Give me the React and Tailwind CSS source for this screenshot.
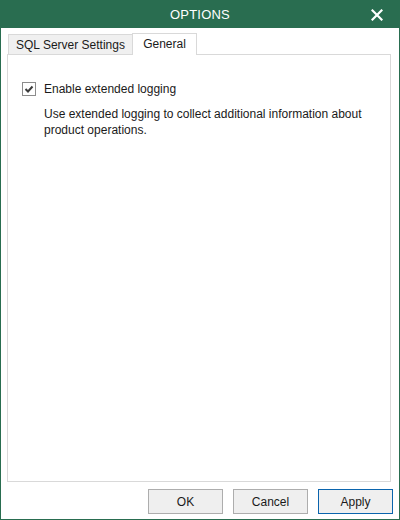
import React from 'react';

const font = { fontFamily: '"Liberation Sans", Arial, sans-serif' };

const CloseIcon = () => (
  <svg width="12" height="12" viewBox="0 0 12 12" className="block">
    <path d="M1.5 1.5 L10.5 10.5 M10.5 1.5 L1.5 10.5" stroke="#ffffff" strokeWidth="2.2" strokeLinecap="square" />
  </svg>
);

const CheckBox = () => (
  <span className="w-[14px] h-[14px] border border-[#8c8c8c] bg-white flex items-center justify-center">
    <svg width="10" height="10" viewBox="0 0 10 10" className="block">
      <path d="M1.5 5 L4 7.5 L8.5 2.5" fill="none" stroke="#3c3c3c" strokeWidth="2" />
    </svg>
  </span>
);

const Button = ({ children, primary }) => (
  <button
    className={
      primary
        ? 'w-[75px] h-[25px] bg-[#efefef] border border-[#0a64ad] text-[12px] text-[#1a1a1a]'
        : 'w-[75px] h-[25px] bg-[#efefef] border border-[#adadad] text-[12px] text-[#1a1a1a]'
    }
  >
    {children}
  </button>
);

export default function App() {
  return (
    <div style={font} className="w-[400px] h-[520px] border border-[#296d50] bg-white flex flex-col text-[12px] text-[#1a1a1a]">
      {/* Title bar */}
      <div className="h-[27px] bg-[#296d50] grid grid-cols-[1fr_auto_1fr] items-center text-white">
        <div />
        <div className="text-[13px] tracking-[0.2px]">OPTIONS</div>
        <div className="flex justify-end pr-[16px]">
          <CloseIcon />
        </div>
      </div>

      {/* Tabs */}
      <div className="flex items-end pl-[7px] mt-[4px] h-[22px]">
        <div className="w-[125px] h-[20px] border border-b-0 border-[#d9d9d9] bg-[#f0f0f0] flex items-center justify-center">
          SQL Server Settings
        </div>
        <div className="w-[65px] h-[22px] -ml-px border border-b-0 border-[#d9d9d9] bg-white flex items-center justify-center relative z-10 -mb-px pb-[1px]">
          General
        </div>
      </div>

      {/* Panel */}
      <div className="ml-[6px] w-[384px] h-[428px] border border-[#d9d9d9] pt-[25px] pl-[14px]">
        <div className="flex items-center gap-[8px]">
          <CheckBox />
          <span>Enable extended logging</span>
        </div>
        <p className="mt-[8px] ml-[22px] w-[335px] leading-[16px]">
          Use extended logging to collect additional information about product operations.
        </p>
      </div>

      {/* Buttons */}
      <div className="flex justify-end gap-[10px] pr-[6px] mt-[7px]">
        <Button>OK</Button>
        <Button>Cancel</Button>
        <Button primary>Apply</Button>
      </div>
    </div>
  );
}
